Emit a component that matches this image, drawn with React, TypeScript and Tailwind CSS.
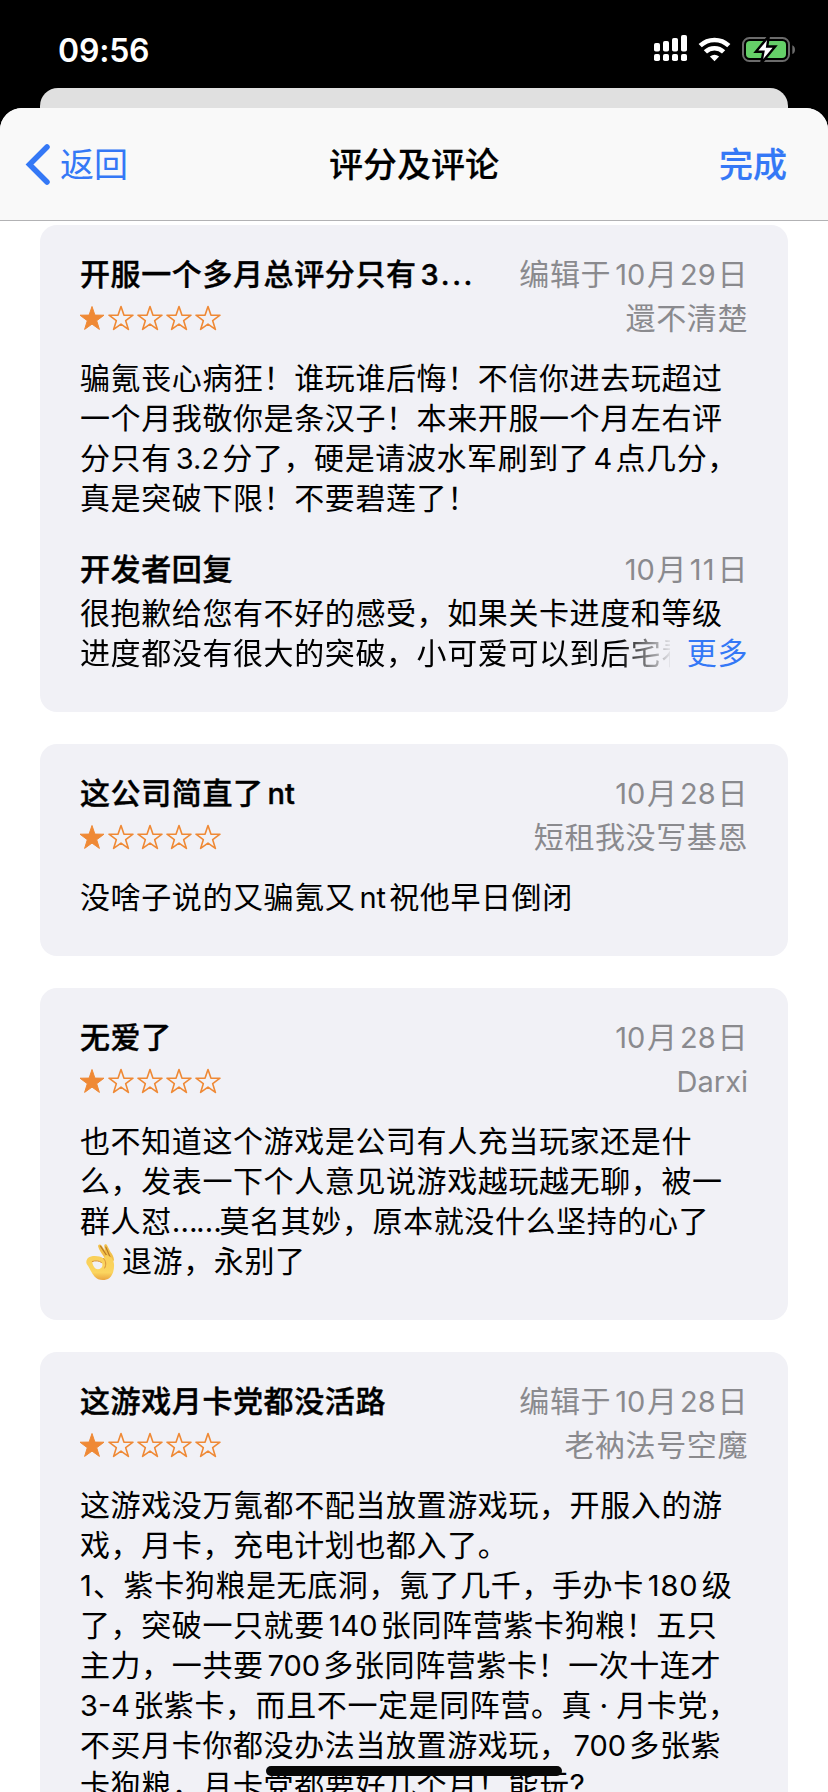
import { Fragment, ReactNode } from "react";
import clsx from "clsx";

type Reply = {
  date: string;
  lines: string[];
};

type Review = {
  title: string;
  date: string;
  author: string;
  rating: number;
  lines: string[];
  reply?: Reply;
};

const reviews: Review[] = [
  {
    title: "开服一个多月总评分只有3...",
    date: "编辑于10月29日",
    author: "還不清楚",
    rating: 1,
    lines: [
      "骗氪丧心病狂！谁玩谁后悔！不信你进去玩超过",
      "一个月我敬你是条汉子！本来开服一个月左右评",
      "分只有3.2分了，硬是请波水军刷到了4点几分，",
      "真是突破下限！不要碧莲了！",
    ],
    reply: {
      date: "10月11日",
      lines: [
        "很抱歉给您有不好的感受，如果关卡进度和等级",
        "进度都没有很大的突破，小可爱可以到后宅看",
      ],
    },
  },
  {
    title: "这公司简直了nt",
    date: "10月28日",
    author: "短租我没写基恩",
    rating: 1,
    lines: ["没啥子说的又骗氪又nt祝他早日倒闭"],
  },
  {
    title: "无爱了",
    date: "10月28日",
    author: "Darxi",
    rating: 1,
    lines: [
      "也不知道这个游戏是公司有人充当玩家还是什",
      "么，发表一下个人意见说游戏越玩越无聊，被一",
      "群人怼……莫名其妙，原本就没什么坚持的心了",
      "👌退游，永别了",
    ],
  },
  {
    title: "这游戏月卡党都没活路",
    date: "编辑于10月28日",
    author: "老衲法号空魔",
    rating: 1,
    lines: [
      "这游戏没万氪都不配当放置游戏玩，开服入的游",
      "戏，月卡，充电计划也都入了。",
      "1、紫卡狗粮是无底洞，氪了几千，手办卡180级",
      "了，突破一只就要140张同阵营紫卡狗粮！五只",
      "主力，一共要700多张同阵营紫卡！一次十连才",
      "3-4张紫卡，而且不一定是同阵营。真·月卡党，",
      "不买月卡你都没办法当放置游戏玩，700多张紫",
      "卡狗粮，月卡党都要好几个月！能玩?",
    ],
  },
];

function OkHand() {
  return (
    <svg className="mr-[7px] ml-[6px] inline-block h-[38px] w-[29px] align-[-9px]" viewBox="0 0 29 38" role="img" aria-label="👌">
      <defs>
        <linearGradient id="skin" x1="0" y1="0" x2="0" y2="1">
          <stop offset="0" stopColor="#f9cf58" />
          <stop offset="0.7" stopColor="#fbd55f" />
          <stop offset="1" stopColor="#eaa43f" />
        </linearGradient>
      </defs>
      {/* Raised fingers */}
      <path d="M18 14C15.500 10.500 13.200 7 12.200 3.800c-.6-2.400 2-3.200 3.300-1.200L19 7.500 18.200 3c0-2 2.200-2.400 3-.4L24.500 9C26.500 11 27.800 14 28 17l-3 5Z" fill="#f2c04a" />
      <path d="M14.500 3.200 21 13M19.800 4l4.200 10" stroke="#b97a24" strokeWidth="1.200" fill="none" strokeLinecap="round" />
      {/* Palm with the ring of thumb and index finger */}
      <path
        fillRule="evenodd"
        d="M5 13.500C9 12.500 14 13 17.500 15.500L20 12C24 12.500 27.500 16 28 21c.4 6-1.300 11-4.500 14-4.500 3.200-11.500 2.700-15-1.500C5.500 30 4 25.500 1 21.500-.8 18.500.8 14.500 5 13.500ZM6.300 18.500C6.300 21.500 7.800 24 9.500 25.500c1.800 1.200 4 .8 5.500-.5 1.700-1.500 2-4 .5-5.500-2.500-1.800-6-2.200-9.200-1Z"
        fill="url(#skin)"
      />
      <path d="M17.500 15.500c2.500 2.500 3 6 1.200 9.500M6.300 18.500C9.500 17.300 13 17.700 15.500 19.500" stroke="#d8923a" strokeWidth="1" fill="none" strokeLinecap="round" />
    </svg>
  );
}

function latinTracking(part: string) {
  if (part.endsWith("...")) return "tracking-[2.600px]";
  if (part === "180") return "tracking-[0.900px]";
  if (part === "1" || part === "11") return "tracking-[1.200px]";
  return "tracking-[0px]";
}

// Latin runs and digits get a little breathing room next to Han characters
function Mixed({ text, tight = false }: { text: string; tight?: boolean }) {
  const parts = text.split(/([0-9A-Za-z.-]+|……|·|👌)/u).filter(Boolean);
  const out: ReactNode[] = parts.map((part, i) => {
    if (part === "👌") return <OkHand key={i} />;
    if (part === "……") {
      return (
        <span key={i} className="inline-block w-[47.700px] tracking-[-1.800px]">
          {part}
        </span>
      );
    }
    if (part === "·") {
      return (
        <span key={i} className="inline-block w-[24px] text-center">
          {part}
        </span>
      );
    }
    if (/^[0-9A-Za-z.-]+$/.test(part)) {
      const next = parts[i + 1];
      return (
        <span
          key={i}
          className={clsx(
            "text-[29px]",
            latinTracking(part),
            i > 0 && (tight && parts[i - 1] === "月" ? "ml-[2.500px]" : "ml-[4px]"),
            next && !next.startsWith("、") && (tight ? "mr-[1.700px]" : "mr-[3.200px]")
          )}
        >
          {part}
        </span>
      );
    }
    return <Fragment key={i}>{part}</Fragment>;
  });
  return <>{out}</>;
}

function Stars({ rating }: { rating: number }) {
  return (
    <div className="-ml-px flex gap-[3px]">
      {[0, 1, 2, 3, 4].map((n) => (
        <svg key={n} className="h-[26px] w-[26px]" viewBox="0 0 26 26">
          <path
            d="M13 1.500 15.900 10.100 25 10.200 17.700 15.700 20.400 24.400 13 19.100 5.600 24.400 8.300 15.700 1 10.200 10.100 10.100Z"
            fill={n < rating ? "#ef8935" : "none"}
            stroke="#ef8935"
            strokeWidth={n < rating ? 1 : 1.6}
            strokeLinejoin="round"
          />
        </svg>
      ))}
    </div>
  );
}

function ReviewCard({ review }: { review: Review }) {
  return (
    <article className="rounded-[17px] bg-[#f1f1f6] pt-[27px] pr-[40px] pb-[39px] pl-[40px]">
      <div className="flex h-[44px] items-center justify-between">
        <h2 className="font-medium [-webkit-text-stroke:0.4px_black]">
          <Mixed text={review.title} />
        </h2>
        <span className="text-[#8a8a8e]">
          <Mixed text={review.date} tight />
        </span>
      </div>
      <div className="flex h-[44px] items-center justify-between">
        <Stars rating={review.rating} />
        <span className="text-[#8a8a8e]">
          <Mixed text={review.author} />
        </span>
      </div>
      <div className="mt-[18px]">
        {review.lines.map((line) => (
          <p key={line} className="h-[40px]">
            <Mixed text={line} />
          </p>
        ))}
      </div>
      {review.reply && (
        <div className="mt-[29px]">
          <div className="mb-[2px] flex h-[44px] items-center justify-between">
            <h3 className="font-medium [-webkit-text-stroke:0.4px_black]">开发者回复</h3>
            <span className="text-[#8a8a8e]">
              <Mixed text={review.reply.date} tight />
            </span>
          </div>
          <p className="h-[40px]">{review.reply.lines[0]}</p>
          <div className="flex h-[40px] justify-between">
            <p className="w-[590px] overflow-hidden [mask-image:linear-gradient(to_right,black_538px,transparent_594px)]">
              {review.reply.lines[1]}
            </p>
            <button className="text-[#3478f6]">更多</button>
          </div>
        </div>
      )}
    </article>
  );
}

function StatusBar() {
  return (
    <div className="flex h-[88px] items-start justify-between pt-[33px] pr-[33px] pl-[58px] text-white">
      <span className="mt-px text-[32px] leading-[34px] font-semibold tracking-[-0.200px]">09:56</span>
      <svg className="h-[32px] w-[144px]" viewBox="650 33 144 32">
        <g fill="#fff">
          <rect x="653" y="43" width="6" height="8.500" rx="1.800" />
          <rect x="662" y="41" width="6" height="10.500" rx="1.800" />
          <rect x="671" y="38" width="6" height="13.500" rx="1.800" />
          <rect x="680" y="35" width="6" height="16.500" rx="1.800" />
          <rect x="653" y="54" width="6" height="7" rx="1.800" />
          <rect x="662" y="54" width="6" height="7" rx="1.800" />
          <rect x="671" y="54" width="6" height="7" rx="1.800" />
          <rect x="680" y="54" width="6" height="7" rx="1.800" />
          <path d="M713.500 61.200 708.900 56.600Q713.500 52.900 718.100 56.600Z" />
        </g>
        <g fill="none" stroke="#fff" strokeWidth="4.600">
          <path d="M699.200 45.700a20.600 20.600 0 0 1 28.600 0" />
          <path d="M704.400 51.900a13 13 0 0 1 18.200 0" />
        </g>
        <rect x="742" y="38" width="46" height="23" rx="6.500" fill="none" stroke="#6b6b6b" strokeWidth="2" />
        <path d="M791.300 45.300c3.600 1.200 3.600 7.500 0 8.700Z" fill="#6b6b6b" />
        <rect x="745" y="41" width="40" height="17" rx="4" fill="#65cf68" />
        {/* Charging bolt, cut out of the battery */}
        <path
          d="M767.800 36 754.800 51.800h7.600L760.200 63.300 774.200 46.500h-8Z"
          fill="#fff"
          stroke="#000"
          strokeWidth="2.400"
          strokeLinejoin="miter"
        />
      </svg>
    </div>
  );
}

export default function App() {
  return (
    <div
      lang="zh-CN"
      className="relative flex h-[1792px] w-[828px] flex-col overflow-hidden bg-black font-['Inter','Noto_Sans_CJK_SC',sans-serif] text-[30px] leading-[40px] tracking-[0.600px] whitespace-nowrap text-black"
    >
      <StatusBar />
      {/* Sheet underneath the current one */}
      <div className="mx-[40px] h-[20px] shrink-0 rounded-t-[18px] bg-[#e0e0e0]" />
      <div className="flex min-h-0 flex-1 flex-col overflow-hidden rounded-t-[22px] bg-white">
        <header className="grid h-[113px] shrink-0 grid-cols-3 items-center border-b border-[#b2b2b4] bg-[#f9f9f9] pt-[2px] text-[34px] tracking-normal">
          <button className="flex items-center pl-[25px] text-[#3478f6]">
            <svg className="mr-[9px] h-[42px] w-[26px]" viewBox="0 0 26 42">
              <path d="M22 3 4.500 20.500 22 38" fill="none" stroke="currentColor" strokeWidth="5.500" strokeLinecap="round" strokeLinejoin="miter" />
            </svg>
            返回
          </button>
          <h1 className="text-center font-medium [-webkit-text-stroke:0.200px_black]">评分及评论</h1>
          <button className="pr-[41px] text-right font-medium text-[#3478f6] [-webkit-text-stroke:0.200px_#3478f6]">完成</button>
        </header>
        <main className="flex flex-col gap-[32px] px-[40px] pt-[4px]">
          {reviews.map((review) => (
            <ReviewCard key={review.title} review={review} />
          ))}
        </main>
      </div>
      {/* Home indicator */}
      <div className="absolute bottom-[16px] left-[266px] h-[10px] w-[296px] rounded-full bg-[#080808]" />
    </div>
  );
}
